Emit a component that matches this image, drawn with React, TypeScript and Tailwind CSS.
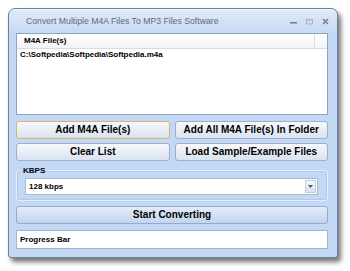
import React from "react";

const btn =
  "h-[18px] flex items-center justify-center rounded-[3px] border text-[10px] font-bold text-black leading-none";

export default function App() {
  return (
    <div
      className="w-[350px] h-[271px] bg-white pt-[8px] pl-[8px]"
      style={{ fontFamily: '"Liberation Sans", Arial, sans-serif' }}
    >
      <div className="w-[330px] h-[250px] rounded-t-[7px] rounded-b-[3px] border border-[#6d7f99] bg-[#c3d8f4] shadow-[3px_4px_5px_rgba(0,0,0,0.55)] flex flex-col overflow-hidden">
        {/* title bar */}
        <div className="h-[24px] flex items-center pl-[17px] pr-[8px] bg-gradient-to-b from-[#dfeaf9] to-[#c6daf4] border-t border-[#f4f8fe] rounded-t-[6px]">
          <span className="text-[8.7px] text-[#5e6b7c] leading-none">
            Convert Multiple M4A Files To MP3 Files Software
          </span>
          <div className="ml-auto flex items-center gap-[9px] pr-0">
            <svg width="7" height="7" viewBox="0 0 7 7">
              <rect x="0" y="4" width="7" height="1.5" fill="#6e7a8a" />
            </svg>
            <svg width="7" height="7" viewBox="0 0 7 7">
              <rect x="0.5" y="1.5" width="6" height="4.5" fill="none" stroke="#a7b3c3" strokeWidth="1" />
              <rect x="0.5" y="1" width="6" height="1.5" fill="#a7b3c3" />
            </svg>
            <svg width="7" height="7" viewBox="0 0 7 7">
              <path d="M1 1 L6 6 M6 1 L1 6" stroke="#6e7a8a" strokeWidth="1.4" />
            </svg>
          </div>
        </div>

        {/* content */}
        <div className="pl-[7px] pr-[9px] flex flex-col">
          {/* list box */}
          <div className="h-[82px] bg-white border border-[#8ea4c0] flex flex-col">
            <div className="h-[15px] flex items-stretch bg-gradient-to-b from-white to-[#f1f4f8] border-b border-[#d6dde6]">
              <div className="w-[298px] border-r border-[#d9dfe7] flex items-center pl-[7px] text-[8px] font-bold text-black leading-none">
                M4A File(s)
              </div>
            </div>
            <div className="pl-[3px] pt-[1px] text-[8px] font-bold text-black leading-[10px]">
              C:\Softpedia\Softpedia\Softpedia.m4a
            </div>
          </div>

          {/* buttons */}
          <div className="mt-[6px] grid grid-cols-2 gap-x-[5px] gap-y-[4px]">
            <div className={`${btn} border-[#d9b46e] bg-gradient-to-b from-[#f6f8fc] via-[#e9eef6] to-[#d9e2ee]`}>
              Add M4A File(s)
            </div>
            <div className={`${btn} border-[#9db0c8] bg-gradient-to-b from-[#f6f8fc] via-[#e9eef6] to-[#d9e2ee]`}>
              Add All M4A File(s) In Folder
            </div>
            <div className={`${btn} border-[#9db0c8] bg-gradient-to-b from-[#f6f8fc] via-[#e9eef6] to-[#d9e2ee]`}>
              Clear List
            </div>
            <div className={`${btn} border-[#9db0c8] bg-gradient-to-b from-[#f6f8fc] via-[#e9eef6] to-[#d9e2ee]`}>
              Load Sample/Example Files
            </div>
          </div>

          {/* KBPS group */}
          <div className="relative mt-[9px] h-[31px] rounded-[3px] border border-[#e6eefa] shadow-[inset_0_0_0_1px_rgba(150,175,210,0.35)] pt-[7px] pl-[8px] pr-[9px]">
            <span className="absolute left-[4px] top-[-5px] px-[2px] bg-[#c3d8f4] text-[8px] font-bold text-black leading-[9px]">
              KBPS
            </span>
            <div className="h-[17px] bg-white border border-[#a9bbd2] flex items-center">
              <span className="pl-[3px] text-[8px] font-bold text-black leading-none">128 kbps</span>
              <div className="ml-auto mr-px h-[13px] w-[11px] border border-[#c3cfdd] bg-gradient-to-b from-[#f3f6fa] to-[#dbe3ed] flex items-center justify-center">
                <svg width="5" height="3" viewBox="0 0 5 3">
                  <path d="M0 0 L5 0 L2.5 3 Z" fill="#4d5866" />
                </svg>
              </div>
            </div>
          </div>

          {/* start converting */}
          <div className={`${btn} mt-[5px] border-[#93abcd] bg-gradient-to-b from-[#e3ecf8] via-[#d3e1f3] to-[#c2d5ee]`}>
            Start Converting
          </div>

          {/* progress */}
          <div className="mt-[6px] h-[19px] bg-white border border-[#9fb5d2] flex items-center pl-[3px] text-[8px] font-bold text-black leading-none">
            Progress Bar
          </div>
        </div>
      </div>
    </div>
  );
}
